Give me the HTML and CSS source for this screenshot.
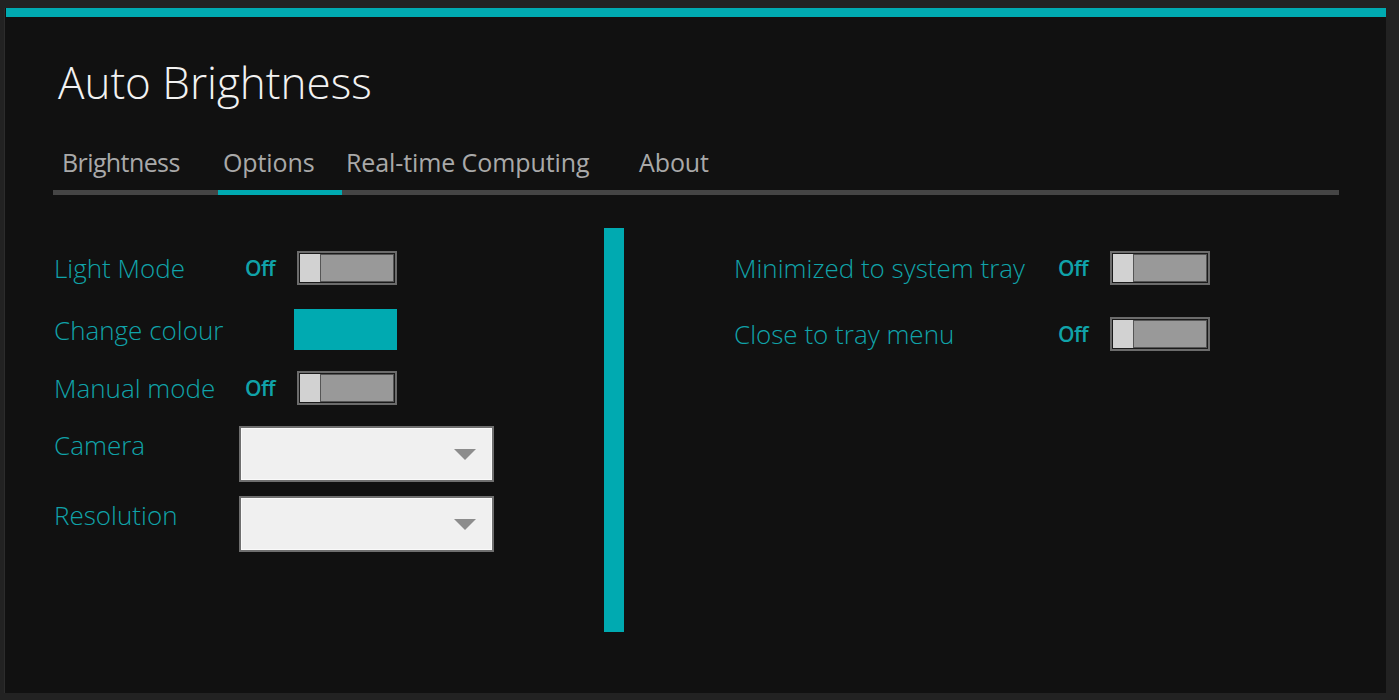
FILE: index.html
```html
<!DOCTYPE html>
<html lang="en">

<head>
    <meta charset="UTF-8">
    <title>Auto Brightness</title>
    <link rel="stylesheet" href="styles.css">
</head>

<body>
    <div class="frame">
        <div class="window">
            <div class="accent-bar"></div>

            <h1 class="title">Auto Brightness</h1>

            <nav class="tabs">
                <div class="tab tab-brightness">Brightness</div>
                <div class="tab tab-options active">Options</div>
                <div class="tab tab-realtime">Real-time Computing</div>
                <div class="tab tab-about">About</div>
            </nav>

            <div class="options">
                <section class="col-left">
                    <div class="row row-light">
                        <span class="label">Light Mode</span>
                        <span class="state">Off</span>
                        <div class="toggle"><span class="thumb"></span></div>
                    </div>
                    <div class="row row-colour">
                        <span class="label">Change colour</span>
                        <div class="swatch"></div>
                    </div>
                    <div class="row row-manual">
                        <span class="label">Manual mode</span>
                        <span class="state">Off</span>
                        <div class="toggle"><span class="thumb"></span></div>
                    </div>
                    <div class="row row-combo">
                        <span class="label">Camera</span>
                        <div class="combo"><span class="arrow"></span></div>
                    </div>
                    <div class="row row-combo">
                        <span class="label">Resolution</span>
                        <div class="combo"><span class="arrow"></span></div>
                    </div>
                </section>

                <div class="divider"></div>

                <section class="col-right">
                    <div class="row row-tray">
                        <span class="label">Minimized to system tray</span>
                        <span class="state">Off</span>
                        <div class="toggle"><span class="thumb"></span></div>
                    </div>
                    <div class="row row-close">
                        <span class="label">Close to tray menu</span>
                        <span class="state">Off</span>
                        <div class="toggle"><span class="thumb"></span></div>
                    </div>
                </section>
            </div>
        </div>
    </div>
</body>

</html>
```

FILE: styles.css
```css
* {
    margin: 0;
    padding: 0;
    box-sizing: border-box;
}

body {
    font-family: "Open Sans", "Noto Sans", sans-serif;
    background-color: #1f1f1f;
    width: 1399px;
    height: 700px;
    overflow: hidden;
}

.frame {
    padding: 2px 13px 13px 4px;
    background-color: #222;
    height: 700px;
}

.window {
    background-color: #111;
    height: 685px;
    border-left: 1px solid #2c2c2c;
}

.accent-bar {
    height: 9px;
    margin: 6px 0 0 1px;
    background-color: #00aab1;
}

.title {
    font-weight: 300;
    font-size: 44px;
    color: #f2f2f2;
    line-height: 52px;
    margin: 39px 0 0 53px;
}

/* tab strip */
.tabs {
    display: flex;
    margin: 38px 47px 0 48px;
    box-shadow: inset 0 -5px 0 #454545;
}

.tab {
    font-size: 25px;
    font-weight: 400;
    color: #a9a9a9;
    line-height: 32px;
    padding-bottom: 12px;
    border-bottom: 5px solid transparent;
    white-space: nowrap;
    letter-spacing: -0.1px;
}

.tab-brightness {
    width: 165px;
    padding-left: 9px;
    letter-spacing: -0.6px;
}

.tab-options {
    width: 124px;
    padding-left: 5px;
}

.tab-realtime {
    width: 293px;
    padding-left: 4px;
}

.tab-about {
    padding-left: 4px;
}

.tab.active {
    border-bottom-color: #00aab1;
}

/* option columns */
.options {
    display: flex;
    margin: 33px 0 0 49px;
}

.col-left {
    width: 550px;
    padding-top: 23px;
}

.col-right {
    margin-left: 110px;
    padding-top: 23px;
}

.divider {
    width: 20px;
    height: 404px;
    background-color: #00aab1;
}

.row {
    display: flex;
    align-items: center;
}

.label {
    font-size: 26px;
    font-weight: 300;
    line-height: 30px;
    color: #10a3a9;
    white-space: nowrap;
}

.col-left .label {
    width: 185px;
}

.col-right .label {
    width: 324px;
}

.state {
    font-size: 21px;
    font-weight: 600;
    line-height: 30px;
    color: #10a3a9;
    padding-left: 6px;
    width: 58px;
    letter-spacing: -0.6px;
}

.col-right .state {
    padding-left: 0;
    width: 52px;
}

.toggle {
    width: 100px;
    height: 34px;
    border: 2px solid #6c6c6c;
    background-color: #1a1a1a;
    padding: 1px;
    display: flex;
}

.toggle::after {
    content: "";
    flex: 1;
    background-color: #999;
    border: 1px solid #555;
}

.thumb {
    width: 20px;
    background-color: #d2d2d2;
}

.swatch {
    width: 103px;
    height: 41px;
    margin-left: 55px;
    background-color: #00aab1;
}

.row-colour {
    margin-top: 24px;
}

.row-manual {
    margin-top: 21px;
}

.row-combo {
    align-items: flex-start;
    margin-top: 21px;
}

.row-combo + .row-combo {
    margin-top: 14px;
}

.row-combo .label {
    padding-top: 4px;
}

.combo {
    width: 255px;
    height: 56px;
    border: 2px solid #6f6f6f;
    box-shadow: inset 0 0 0 1px #fafafa;
    background-color: #f0f0f0;
    display: flex;
    align-items: center;
    justify-content: flex-end;
    padding-right: 16px;
}

.arrow {
    width: 0;
    height: 0;
    border-left: 11px solid transparent;
    border-right: 11px solid transparent;
    border-top: 11px solid #8c8c8c;
}

.row-close {
    margin-top: 32px;
}
```
